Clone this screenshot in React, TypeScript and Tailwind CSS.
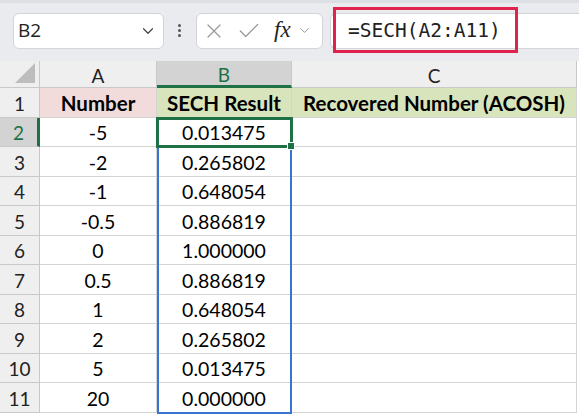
import React from "react";
import { ChevronDown, X, Check } from "lucide-react";

const rows: [string, string][] = [
  ["-5", "0.013475"],
  ["-2", "0.265802"],
  ["-1", "0.648054"],
  ["-0.5", "0.886819"],
  ["0", "1.000000"],
  ["0.5", "0.886819"],
  ["1", "0.648054"],
  ["2", "0.265802"],
  ["5", "0.013475"],
  ["20", "0.000000"],
];

const cellFont = { fontFamily: "Lato, 'Liberation Sans', sans-serif" };

const FormulaBar = () => (
  <div className="relative flex h-[61px] items-center border-t-[3px] border-[#dcdfe3] bg-[#e9ebee] pb-[3px]">
    {/* name box */}
    <div className="ml-[13px] flex h-[36px] w-[151px] items-center justify-between rounded-md border border-[#d3d5d8] bg-white pl-[4px] pr-[6px]">
      <span className="text-[19px] text-[#222]" style={{ fontFamily: "'Open Sans', sans-serif" }}>
        B2
      </span>
      <ChevronDown size={18} strokeWidth={1.6} className="text-[#444]" />
    </div>
    {/* grip dots */}
    <div className="ml-[14px] flex w-[4px] flex-col gap-[2px]">
      <span className="h-[3px] w-[3px] rounded-full bg-[#555]" />
      <span className="h-[3px] w-[3px] rounded-full bg-[#555]" />
      <span className="h-[3px] w-[3px] rounded-full bg-[#555]" />
    </div>
    {/* cancel / enter / function */}
    <div className="ml-[14px] flex h-[36px] w-[127px] items-center rounded-md border border-[#d3d5d8] bg-white pl-[5px]">
      <X size={24} strokeWidth={1.2} className="text-[#9a9a9a]" />
      <Check size={26} strokeWidth={1.2} className="ml-[10px] text-[#9a9a9a]" />
      <span
        className="ml-[12px] text-[23px] italic text-[#222]"
        style={{ fontFamily: "'Liberation Serif', serif" }}
      >
        fx
      </span>
      <ChevronDown size={15} strokeWidth={1.4} className="ml-[6px] text-[#888]" />
    </div>
    {/* formula input */}
    <div className="ml-[7px] flex h-[36px] flex-1 items-center rounded-l-md border border-r-0 border-[#d3d5d8] bg-white pl-[17px]">
      <span className="text-[19.5px] text-[#222]" style={{ fontFamily: "'DejaVu Sans Mono', monospace" }}>
        =SECH(A2:A11)
      </span>
    </div>
    <div className="absolute left-[333px] top-[4px] h-[46px] w-[185px] border-[3px] border-[#e0234e]" />
  </div>
);

const Sheet = () => {
  const head = "flex items-center justify-center border-r border-[#c9c9c9] pt-[2px] text-[19px] leading-none";
  const cell =
    "flex items-center justify-center border-b border-r border-[#d4d4d4] pt-[2px] text-[19.5px] leading-none text-black";
  return (
    <div
      className="relative grid grid-cols-[40px_117px_135px_285px] grid-rows-[27px] auto-rows-[29.5px] bg-white"
      style={cellFont}
    >
      {/* column headers */}
      <div className="relative border-b border-r border-[#c9c9c9] bg-[#efefef]">
        <div className="absolute bottom-[4px] right-[4px] h-0 w-0 border-b-[20px] border-l-[20px] border-b-[#bdbdbd] border-l-transparent" />
      </div>
      <div className={`${head} border-b border-b-[#c9c9c9] bg-[#efefef] text-[#222]`}>A</div>
      <div className={`${head} border-b-[3px] border-b-[#1e7145] bg-[#d3d3d3] text-[#1e7145]`}>B</div>
      <div className={`${head} border-b border-b-[#c9c9c9] bg-[#efefef] text-[#222]`}>C</div>

      {/* header row */}
      <div className="flex items-center justify-center border-b border-r border-[#c9c9c9] bg-[#efefef] pt-[2px] text-[19px] leading-none text-[#222]">
        1
      </div>
      <div className={`${cell} bg-[#f2dcdb] text-[20.5px] font-bold`}>Number</div>
      <div className={`${cell} bg-[#d8e4bc] text-[20.5px] font-bold`}>SECH Result</div>
      <div className={`${cell} bg-[#d8e4bc] text-[20.5px] font-bold`}>Recovered Number (ACOSH)</div>

      {rows.map(([n, r], i) => {
        const active = i === 0;
        return (
          <React.Fragment key={i}>
            <div
              className={`flex items-center justify-center border-b border-[#c9c9c9] pt-[2px] text-[19px] leading-none ${
                active
                  ? "border-r-[3px] border-r-[#1e7145] bg-[#d3d3d3] text-[#1e7145]"
                  : "border-r border-r-[#c9c9c9] bg-[#efefef] text-[#222]"
              }`}
            >
              {i + 2}
            </div>
            <div className={cell}>{n}</div>
            <div className={cell}>{r}</div>
            <div className={cell} />
          </React.Fragment>
        );
      })}

      {/* selected range B2:B11 */}
      <div className="pointer-events-none absolute left-[157px] top-[56.5px] h-[296px] w-[135px] border-2 border-[#3b73d1]" />
      {/* active cell B2 */}
      <div className="pointer-events-none absolute left-[156px] top-[55.5px] h-[31px] w-[137px] border-[3px] border-[#1e7145]">
        <div className="absolute -bottom-[5px] -right-[5px] h-[8px] w-[8px] border border-white bg-[#1e7145]" />
      </div>
    </div>
  );
};

export default function App() {
  return (
    <div className="h-[418px] w-[579px] overflow-hidden bg-white">
      <FormulaBar />
      <Sheet />
    </div>
  );
}
